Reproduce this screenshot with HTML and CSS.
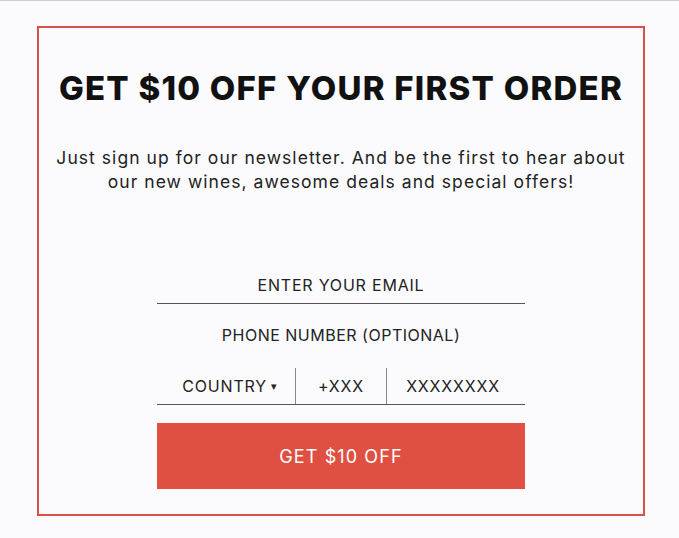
FILE: index.html
```html
<!DOCTYPE html>
<html lang="en">
<head>
  <meta charset="UTF-8" />
  <meta name="viewport" content="width=device-width, initial-scale=1.0" />
  <title>Newsletter Signup</title>
  <link rel="stylesheet" href="styles.css">
</head>
<body>

<div class="popup">
  <h1 class="title">GET $10 OFF YOUR FIRST ORDER</h1>
  <p class="intro">Just sign up for our newsletter. And be the first to hear about our new wines, awesome deals and special offers!</p>

  <form class="signup">
    <input type="email" class="field email" placeholder="ENTER YOUR EMAIL" />
    <div class="phone-label">PHONE NUMBER (OPTIONAL)</div>
    <div class="phone-row">
      <div class="country">COUNTRY <span class="caret">&#9662;</span></div>
      <div class="code">+XXX</div>
      <div class="number">XXXXXXXX</div>
    </div>
    <button type="submit" class="submit">GET $10 OFF</button>
  </form>
</div>

</body>
</html>
```

FILE: styles.css
```css
body {
  margin: 0;
  border-top: 1px solid #cfcfd3;
  background: #fbfbfe;
  font-family: 'Inter', sans-serif;
  color: #1a1a1a;
  height: 537px;
}

.popup {
  margin: 25px 0 0 37px;
  width: 604px;
  height: 486px;
  border: 2px solid #dc4e48;
  box-sizing: content-box;
  text-align: center;
}

.title {
  margin: 40px 0 0;
  font-size: 33px;
  font-weight: 800;
  letter-spacing: 1.25px;
  color: #111;
}

.intro {
  margin: 38px 12px 0;
  font-size: 17.5px;
  line-height: 24px;
  letter-spacing: 1.05px;
  color: #222;
}

.signup {
  width: 368px;
  margin: 73px auto 0;
}

.field {
  display: block;
  width: 100%;
  box-sizing: border-box;
  border: none;
  border-bottom: 1px solid #555;
  background: transparent;
  text-align: center;
  font-family: inherit;
  font-size: 16px;
  letter-spacing: 0.8px;
  padding: 8px 0 8px;
  outline: none;
}

.field::placeholder {
  color: #222;
}

.phone-label {
  margin-top: 21px;
  font-size: 16px;
  letter-spacing: 0.5px;
  color: #222;
}

.phone-row {
  display: flex;
  margin-top: 23px;
  border-bottom: 1px solid #555;
  font-size: 16px;
  letter-spacing: 0.8px;
  color: #222;
}

.phone-row > div {
  display: flex;
  align-items: center;
  justify-content: center;
  height: 36px;
}

.country {
  width: 139px;
  border-right: 1px solid #888;
  padding-left: 8px;
  box-sizing: border-box;
}

.caret {
  font-size: 11px;
  margin-left: 4px;
}

.code {
  width: 90px;
  border-right: 1px solid #888;
}

.number {
  flex: 1;
  padding-right: 6px;
}

.submit {
  display: block;
  width: 100%;
  height: 66px;
  margin-top: 18px;
  border: none;
  background: #e05042;
  color: #fff;
  font-family: inherit;
  font-size: 18px;
  letter-spacing: 1.1px;
}
```
